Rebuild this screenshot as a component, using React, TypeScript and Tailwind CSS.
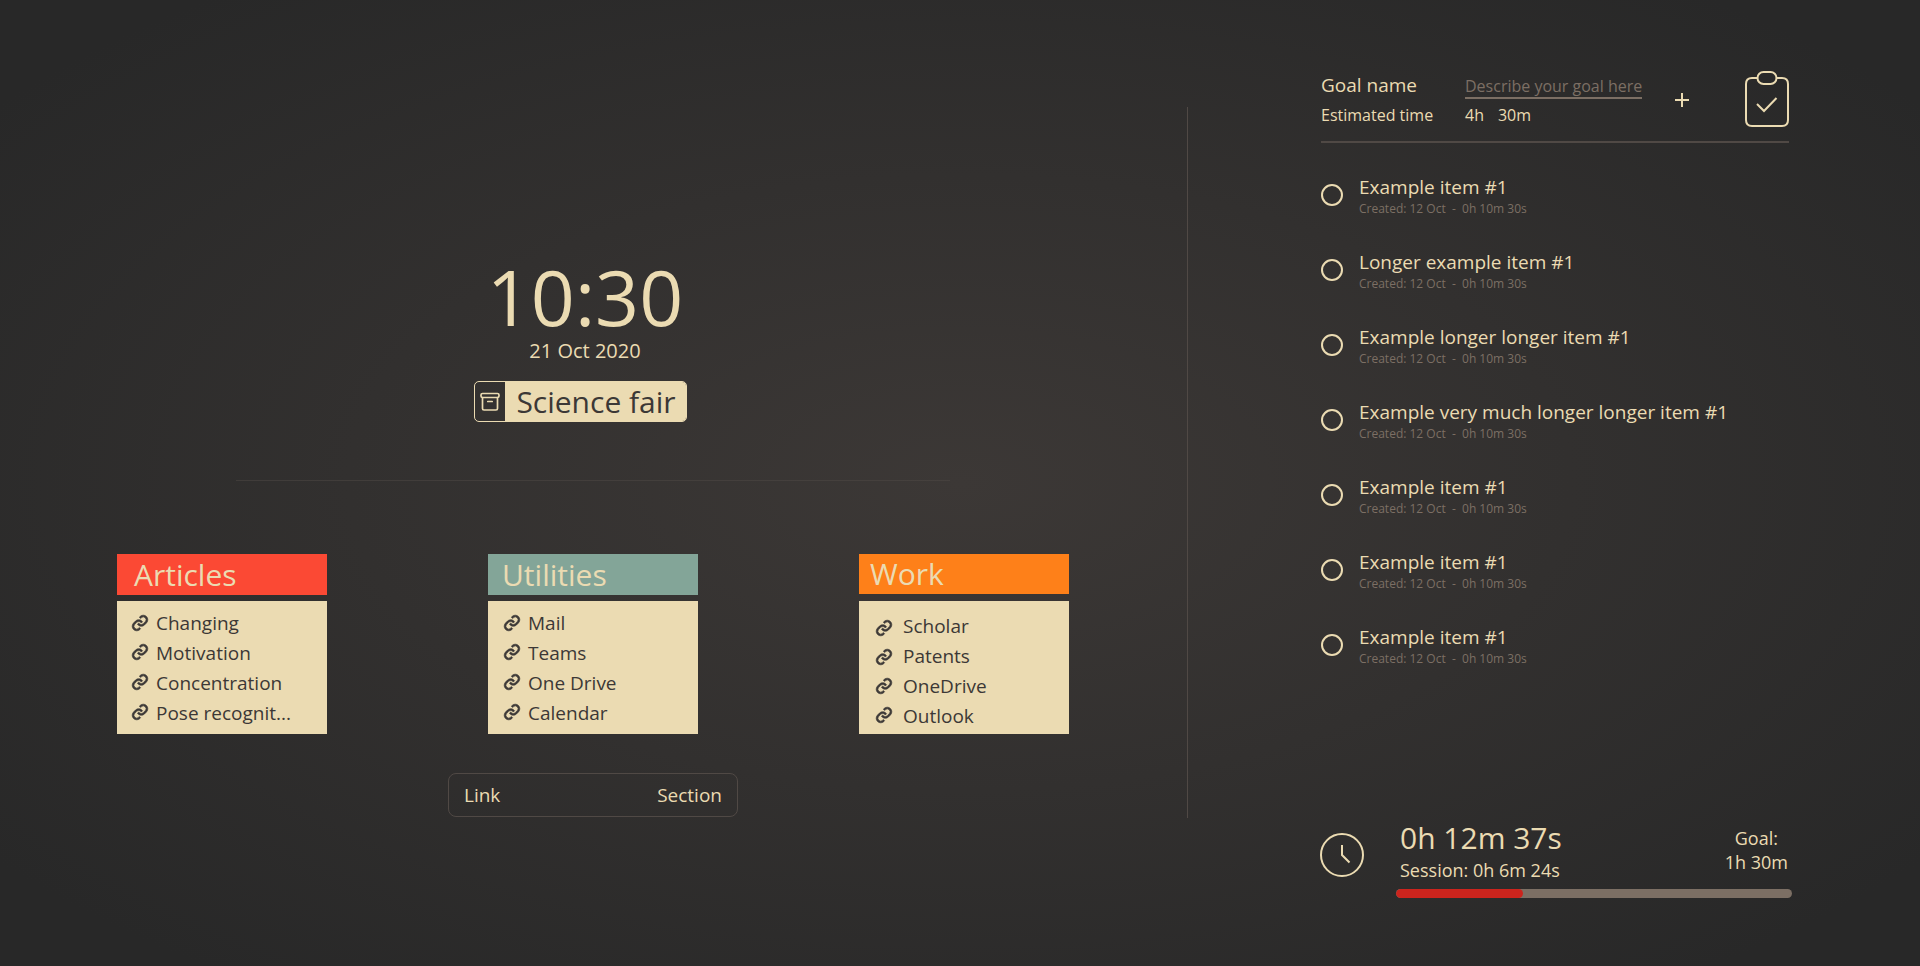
import React from "react";
import { BiLink } from "react-icons/bi";

const INK = "text-[#ebdbb2]";

type CardProps = {
  title: string;
  header: string;
  icons: string;
  iconRow: string;
  labels: string;
  links: string[];
};

function Card({ title, header, icons, iconRow, labels, links }: CardProps) {
  return (
    <section className="flex h-[180px] w-[210px] flex-col justify-between">
      <h2 className={`flex items-center text-[30px] leading-none ${header}`}>{title}</h2>
      <div className="flex h-[133px] bg-[#ebdbb2] text-[#3c3836]">
        <div className={`shrink-0 ${icons}`}>
          {links.map((l) => (
            <div key={l} className={`flex items-center ${iconRow}`}>
              <BiLink className="size-[22px] stroke-[#3c3836] stroke-[0.7]" />
            </div>
          ))}
        </div>
        <ul className={labels}>
          {links.map((l) => (
            <li key={l} className="text-[19px] leading-[30px]">{l}</li>
          ))}
        </ul>
      </div>
    </section>
  );
}

const cards: CardProps[] = [
  { title: "Articles", header: "h-[41px] bg-[#fb4934] pl-[17px]", icons: "w-[39px] pl-[12px] pt-[7px]", iconRow: "h-[29.67px]", labels: "pt-[7px]", links: ["Changing", "Motivation", "Concentration", "Pose recognit..."] },
  { title: "Utilities", header: "h-[41px] bg-[#83a598] pl-[14px]", icons: "w-[40px] pl-[13px] pt-[7px]", iconRow: "h-[29.67px]", labels: "pt-[7px]", links: ["Mail", "Teams", "One Drive", "Calendar"] },
  { title: "Work", header: "h-[40px] bg-[#fe8019] pl-[11px]", icons: "w-[44px] pl-[14px] pt-[12.500px]", iconRow: "h-[29px]", labels: "pt-[10px]", links: ["Scholar", "Patents", "OneDrive", "Outlook"] },
];

const goals = [
  "Example item #1",
  "Longer example item #1",
  "Example longer longer item #1",
  "Example very much longer longer item #1",
  "Example item #1",
  "Example item #1",
  "Example item #1",
];

export default function App() {
  return (
    <div className={`flex h-[966px] w-[1920px] overflow-hidden bg-[radial-gradient(ellipse_farthest-corner_at_50%_50%,#3c3836_0%,#282828_90%)] font-['Open_Sans','Noto_Sans',sans-serif] ${INK}`}>
      <main className="flex w-[1187px] flex-col items-center pt-[252px] pr-px">
        <div className="mr-[16px] flex h-[89px] items-center text-[77px] leading-none">10:30</div>
        <div className="mt-px mr-[16px] text-[20px] leading-[18px]">21 Oct 2020</div>
        <div className="mt-[21px] mr-[25px] flex h-[41px] w-[213px] overflow-hidden rounded-[5px] border border-[#ebdbb2]">
          <div className="flex w-[30px] items-center justify-center">
            <svg viewBox="0 0 20 20" className="size-5" fill="none" stroke="#ebdbb2" strokeWidth="1.7" strokeLinecap="round" strokeLinejoin="round">
              <rect x="1" y="1.5" width="18" height="4" rx="1.5" />
              <path d="M2.500 5.500V16.500Q2.500 18 4 18H16Q17.500 18 17.500 16.500V5.500M7.800 9.500H12.200" />
            </svg>
          </div>
          <div className="flex flex-1 items-center justify-center bg-[#ebdbb2] pl-px text-[30px] leading-none text-[#3c3836]">Science fair</div>
        </div>
        <div className="mt-[58px] h-px w-[714px] bg-[#504945]/50" />
        <div className="mt-[73px] flex w-[952px] justify-between">
          {cards.map((c) => (
            <Card key={c.title} {...c} />
          ))}
        </div>
        <div className="mt-[39px] flex h-[44px] w-[290px] items-center justify-between rounded-[8px] border border-[#504945] px-[15px] text-[19px]">
          <span>Link</span>
          <span>Section</span>
        </div>
      </main>
      <div className="mt-[107px] h-[711px] w-px bg-[#504945]" />
      <aside className="ml-[133px] w-[480px] pt-[71px]">
        <header className="flex h-[72px] w-[468px] border-b-2 border-[#504945]">
          <div className="w-[144px]">
            <div className="text-[19px] leading-7">Goal name</div>
            <div className="mt-[2px] text-[16px] leading-7">Estimated time</div>
          </div>
          <div className="w-[177px]">
            <div className="h-[28px] border-b-2 border-[#7c6f64] text-[16px] leading-[30px] whitespace-nowrap text-[#7c6f64]">Describe your goal here</div>
            <div className="mt-[2px] flex gap-[14px] text-[16px] leading-7">
              <span>4h</span>
              <span>30m</span>
            </div>
          </div>
          <svg viewBox="0 0 14 14" className="mt-[22px] ml-[33px] size-[14px]" stroke="#ebdbb2" strokeWidth="2">
            <path d="M7 0V14M0 7H14" />
          </svg>
          <svg viewBox="0 0 44 57" className="-mt-px ml-auto h-[57px] w-[44px]" fill="none" stroke="#ebdbb2" strokeWidth="2">
            <path d="M12.500 8H7Q1 8 1 14V50Q1 56 7 56H37Q43 56 43 50V14Q43 8 37 8H31.500" />
            <rect x="12.500" y="2" width="19" height="12" rx="6" />
            <path d="M12 34L19 41L31.500 28" />
          </svg>
        </header>
        <ul className="mt-[30px] h-[650px]">
          {goals.map((g, i) => (
            <li key={i} className="flex h-[75px]">
              <span className="mt-[11px] size-[22px] shrink-0 rounded-full border-2 border-[#ebdbb2]" />
              <div className="ml-[16px]">
                <div className="text-[19px] leading-[28px]">{g}</div>
                <div className="text-[12px] leading-[16px] whitespace-pre text-[#7c6f64]">{"Created: 12 Oct  -  0h 10m 30s"}</div>
              </div>
            </li>
          ))}
        </ul>
        <footer className="-ml-px flex">
          <svg viewBox="0 0 44 44" className="mt-[10px] size-[44px]" fill="none" stroke="#ebdbb2" strokeWidth="2">
            <circle cx="22" cy="22" r="21" />
            <path d="M22 12V22L29.500 29.500" />
          </svg>
          <div className="ml-[32px] w-[396px]">
            <div className="flex h-[66px] justify-between pr-[4px] pl-[4px]">
              <div>
                <div className="text-[30px] leading-[30px]">0h 12m 37s</div>
                <div className="text-[18px] leading-[34px]">Session: 0h 6m 24s</div>
              </div>
              <div className="pt-[3px] text-center text-[18px] leading-[24px]">
                Goal:
                <br />
                1h 30m
              </div>
            </div>
            <div className="h-[9px] overflow-hidden rounded-full bg-[#7c6f64]">
              <div className="h-full w-[127px] rounded-full bg-[#cc241d]" />
            </div>
          </div>
        </footer>
      </aside>
    </div>
  );
}
